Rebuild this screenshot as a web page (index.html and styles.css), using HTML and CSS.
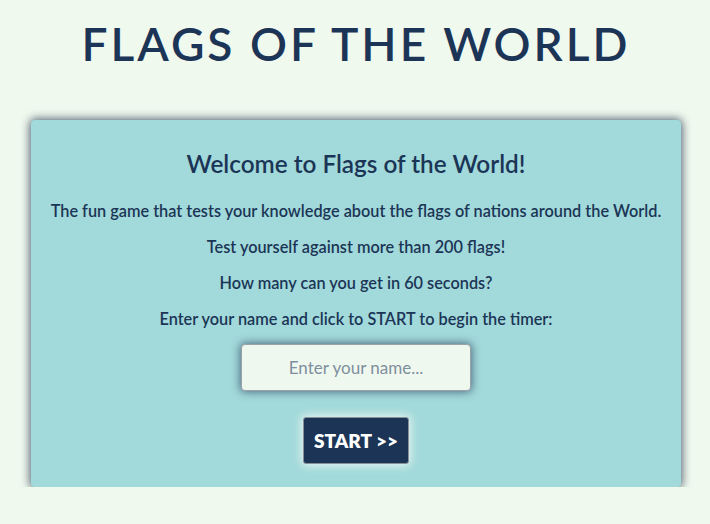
FILE: index.html
```html
<!DOCTYPE html>
<html lang="en">
<head>
<meta charset="utf-8">
<title>Flags of the World</title>
<link rel="stylesheet" href="styles.css">
</head>
<body>
<h1 class="title">FLAGS OF THE WORLD</h1>
<main class="card">
  <h2 class="welcome">Welcome to Flags of the World!</h2>
  <p class="line">The fun game that tests your knowledge about the flags of nations around the World.</p>
  <p class="line">Test yourself against more than 200 flags!</p>
  <p class="line">How many can you get in 60 seconds?</p>
  <p class="line">Enter your name and click to START to begin the timer:</p>
  <input class="name" type="text" placeholder="Enter your name...">
  <button class="start" type="button">START &gt;&gt;</button>
</main>
</body>
</html>
```
FILE: styles.css
```css
html, body {
  margin: 0;
  padding: 0;
}
body {
  background: #f0f9ee;
  font-family: "Lato", "Open Sans", sans-serif;
  color: #1b3556;
  padding: 0 29px 0 31px;
}
.title {
  margin: 0;
  padding-top: 18px;
  height: 120px;
  box-sizing: border-box;
  text-align: center;
  font-size: 46px;
  font-weight: 600;
  letter-spacing: 3px;
  color: #1c3557;
  line-height: 52px;
}
.card {
  background: #a2d9da;
  border-radius: 4px;
  box-shadow: 0 0 10px 1px #4a5a6d;
  display: flex;
  flex-direction: column;
  align-items: center;
  padding: 28px 0 22px;
  height: 367px;
  box-sizing: border-box;
}
.welcome {
  margin: 0 0 21px;
  font-size: 24.3px;
  font-weight: 600;
  line-height: 32px;
}
.line {
  margin: 0 0 16px;
  font-size: 16.3px;
  font-weight: 600;
  line-height: 20px;
}
.name {
  margin-top: -1px;
  width: 230px;
  height: 47px;
  box-sizing: border-box;
  background: #eff8ee;
  border: 1px solid #9aa3a8;
  border-radius: 4px;
  box-shadow: 0 0 8px 1px #4d6b80;
  font-family: inherit;
  font-size: 17px;
  text-align: center;
  color: #1b3556;
  outline: none;
}
.name::placeholder {
  color: #7e8f9e;
}
.start {
  margin-top: 26px;
  width: 106px;
  height: 47px;
  background: #1c3557;
  color: #ffffff;
  border: 1px solid #8a9196;
  border-radius: 3px;
  box-shadow: 0 0 8px 2px #e3f3f0;
  font-family: inherit;
  font-size: 19px;
  font-weight: 800;
  cursor: pointer;
}
```
